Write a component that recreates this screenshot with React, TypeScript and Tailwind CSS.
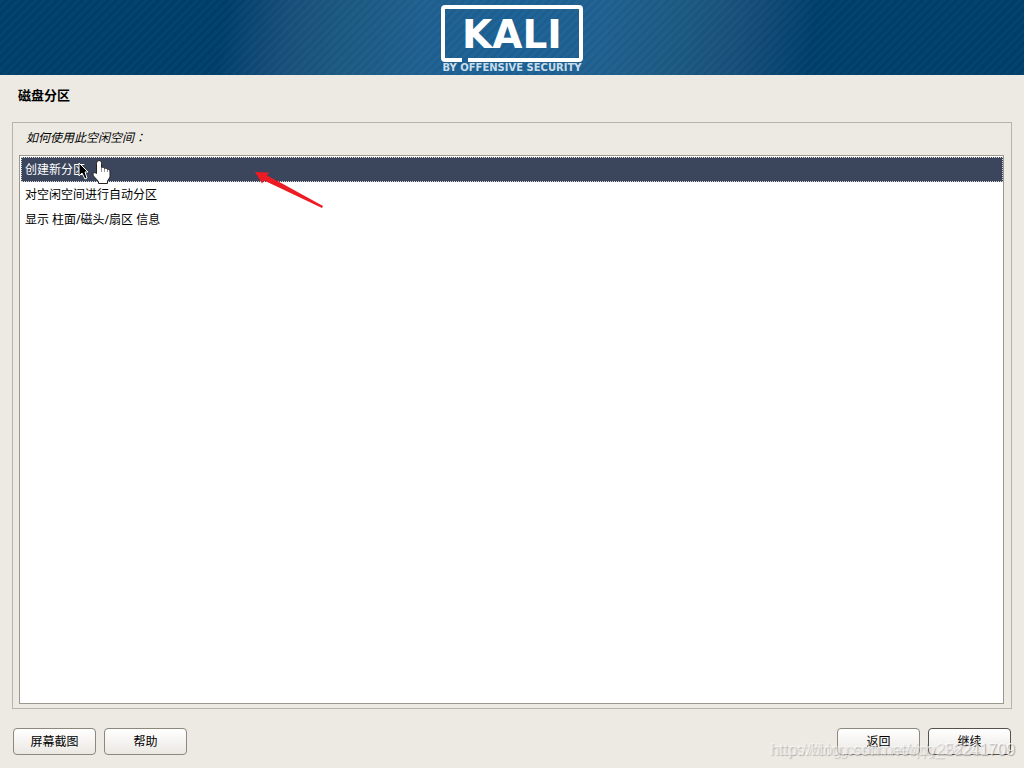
import { useState } from "react";

const options = ["创建新分区", "对空闲空间进行自动分区", "显示 柱面/磁头/扇区 信息"];

const buttonClass =
  "h-[27px] w-[83px] rounded-[4px] border bg-linear-to-b from-white to-[#ebe8e3] text-[12px] leading-[25px] text-black";

function Banner() {
  return (
    <header className="flex h-[75px] justify-center bg-[repeating-linear-gradient(135deg,#ffffff05_0px,#ffffff05_3px,#00000005_3px,#00000005_6px),linear-gradient(100deg,#003f6c_0%,#003f6c_22%,#174f7a_28%,#1c5a82_34%,#1f6090_41%,#1c6195_50%,#1f6090_59%,#1c5a82_66%,#174f7a_72%,#003f6c_79%,#003f6c_100%)]">
      <svg width="146" height="75" viewBox="0 0 146 75" role="img" aria-label="KALI BY OFFENSIVE SECURITY">
        <path
          d="M23 60H6Q4 60 4 58V9Q4 7 6 7H140Q142 7 142 9V58Q142 60 140 60H29"
          fill="none"
          stroke="#fff"
          strokeWidth="4"
        />
        <text x="73" y="48" textAnchor="middle" fill="#fff" className="font-['DejaVu_Sans',sans-serif] text-[39px] font-bold">
          KALI
        </text>
        <text x="73" y="71" textAnchor="middle" fill="#c9deeb" className="font-['DejaVu_Sans',sans-serif] text-[10px] font-bold">
          BY OFFENSIVE SECURITY
        </text>
      </svg>
    </header>
  );
}

function Pointers() {
  return (
    <svg className="pointer-events-none absolute left-[58px] top-0" width="250" height="56" viewBox="0 0 250 56" aria-hidden="true">
      <path d="M1 7V20L4 17L7 23L9 22L7 16H10Z" fill="#000" stroke="#fff" strokeWidth="1" />
      <path
        d="M21 4.5C23 4.5 23.5 6 23.5 7.5V11.5C25 11 26 11.5 26.5 12.5C28 12 29 12.5 29.5 13.5C31 13 32 14 32 16V21L29.5 25V27.5H20.5V25.5L15.5 20C14 17.5 16 15.5 18.5 17.5V7.5Q18.5 4.5 21 4.5Z"
        fill="#fff"
        stroke="#222"
        strokeWidth="1"
      />
      <path d="M23.5 12V16M26.5 13V16M29.5 14V16" stroke="#666" strokeWidth="0.7" />
      <path d="M177 16L191 16.5L189 19.5L205 28L245 50L244 52L202 32L186 24.5L184 27.5Z" fill="#ed1c24" />
    </svg>
  );
}

function Watermark() {
  return (
    <div
      aria-hidden="true"
      className="pointer-events-none absolute top-3 -right-[3px] grid justify-items-end font-['Liberation_Sans',sans-serif] text-[16px] leading-5 whitespace-nowrap text-white/50 [text-shadow:1px_1px_1px_#00000028]"
    >
      <span className="col-start-1 row-start-1">https://blog.csdn.net/qq_28241709</span>
      <span className="col-start-1 row-start-1">http://blog.csdn.net/qdy252211709</span>
    </div>
  );
}

export default function App() {
  const [selected, setSelected] = useState(0);
  return (
    <div className="flex min-h-screen flex-col bg-[#edeae3] font-['Noto_Sans','Noto_Sans_CJK_SC',sans-serif] text-[12px] text-black">
      <Banner />
      <main className="flex flex-1 flex-col px-3 pb-[13px]">
        <h1 className="flex h-[47px] items-start px-[6px] pt-[11px] text-[13px] leading-[18px] font-bold">磁盘分区</h1>
        <section className="flex flex-1 flex-col border border-[#b8b4aa] pr-[7px] pb-1 pl-[6px]">
          <h2 id="question" className="h-8 px-[7px] pt-1 leading-[20px] italic">
            如何使用此空闲空间<span className="font-['Noto_Sans_CJK_TC',sans-serif]">：</span>
          </h2>
          <div className="relative flex-1 border border-[#9d988d] bg-white pt-px pl-px">
            <ul role="listbox" aria-labelledby="question">
              {options.map((option, i) => (
                <li key={option} role="option" aria-selected={i === selected}>
                  <button
                    type="button"
                    onClick={() => setSelected(i)}
                    className={
                      i === selected
                        ? "block h-[25px] w-full border border-dotted border-[#d5d5d5] bg-[#3b455b] px-[3px] text-left leading-[23px] text-white"
                        : "block h-[25px] w-full border border-transparent px-[3px] text-left leading-[23px]"
                    }
                  >
                    {option}
                  </button>
                </li>
              ))}
            </ul>
            <Pointers />
          </div>
        </section>
        <footer className="relative mt-[19px] flex gap-2 px-px">
          <button type="button" className={buttonClass + " border-[#8d877c]"}>屏幕截图</button>
          <button type="button" className={buttonClass + " border-[#8d877c]"}>帮助</button>
          <button type="button" className={buttonClass + " ml-auto border-[#8d877c]"}>返回</button>
          <button type="button" className={buttonClass + " border-[#56524b]"}>继续</button>
          <Watermark />
        </footer>
      </main>
    </div>
  );
}
